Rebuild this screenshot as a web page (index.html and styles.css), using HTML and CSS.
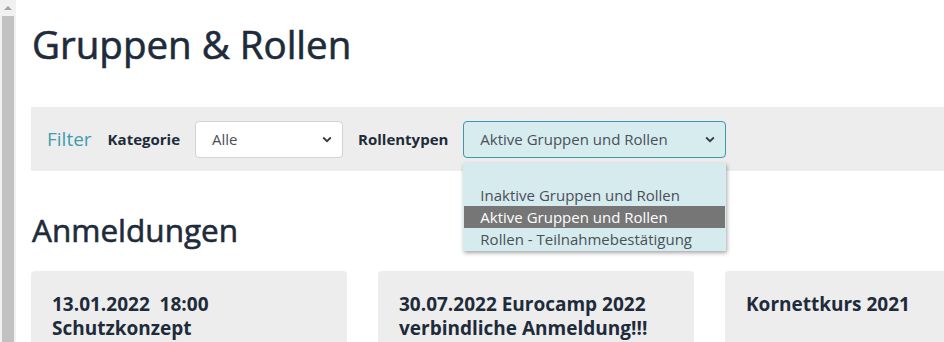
FILE: index.html
```html
<!DOCTYPE html>
<html lang="de">
<head>
    <meta charset="UTF-8">
    <meta name="viewport" content="width=device-width, initial-scale=1.0">
    <title>Gruppen &amp; Rollen</title>
    <link rel="stylesheet" href="styles.css">
</head>
<body>
    <div class="page">
        <div class="scrollbar">
            <div class="scroll-arrow"></div>
            <div class="scroll-thumb"></div>
        </div>
        <main class="content">
            <h1>Gruppen &amp; Rollen</h1>

            <div class="filter">
                <span class="filter-title">Filter</span>
                <span class="filter-label">Kategorie</span>
                <div class="select select-kategorie">
                    <span>Alle</span>
                    <svg class="chevron" width="10" height="7" viewBox="0 0 10 7"><path d="M1.2 1.5 L5 5.2 L8.8 1.5" fill="none" stroke="#343a40" stroke-width="1.8"/></svg>
                </div>
                <span class="filter-label">Rollentypen</span>
                <div class="select-wrap">
                    <div class="select select-rollen">
                        <span>Aktive Gruppen und Rollen</span>
                        <svg class="chevron" width="10" height="7" viewBox="0 0 10 7"><path d="M1.2 1.5 L5 5.2 L8.8 1.5" fill="none" stroke="#343a40" stroke-width="1.8"/></svg>
                    </div>
                    <!-- open option list of the select -->
                    <ul class="dropdown">
                        <li class="empty"></li>
                        <li>Inaktive Gruppen und Rollen</li>
                        <li class="selected">Aktive Gruppen und Rollen</li>
                        <li>Rollen - Teilnahmebestätigung</li>
                    </ul>
                </div>
            </div>

            <h2>Anmeldungen</h2>

            <div class="cards">
                <div class="card">
                    <h3>13.01.2022&nbsp;&nbsp;18:00<br>Schutzkonzept</h3>
                </div>
                <div class="card">
                    <h3>30.07.2022 Eurocamp 2022<br>verbindliche Anmeldung!!!</h3>
                </div>
                <div class="card">
                    <h3>Kornettkurs 2021</h3>
                </div>
            </div>
        </main>
    </div>
</body>
</html>
```

FILE: styles.css
```css
body {
    margin: 0;
    padding: 0;
    font-family: "Open Sans", "Noto Sans", sans-serif;
    color: #1e2b3a;
    background-color: #fff;
    overflow: hidden;
}
.page {
    display: flex;
    height: 342px;
    overflow: hidden;
}
.scrollbar {
    flex: 0 0 16px;
    background-color: #f1f1f1;
    display: flex;
    flex-direction: column;
    align-items: center;
}
.scroll-arrow {
    margin-top: 6px;
    width: 0;
    height: 0;
    border-left: 4px solid transparent;
    border-right: 4px solid transparent;
    border-bottom: 4px solid #a3a3a3;
}
.scroll-thumb {
    margin-top: 6px;
    width: 12px;
    flex: 1;
    background-color: #c1c1c1;
}
.content {
    flex: 0 0 1100px;
    padding: 0 15px;
}
h1,
h2 {
    font-weight: 500;
    -webkit-text-stroke: 0.6px #1e2b3a;
    padding-left: 1px;
}
h1 {
    font-size: 38.5px;
    margin: 18px 0 0;
    line-height: 52px;
}
h2 {
    font-size: 31.5px;
    margin: 37px 0 0;
    line-height: 44px;
}
.filter {
    margin-top: 37px;
    width: 1000px;
    height: 64px;
    box-sizing: border-box;
    padding: 0 16px;
    background-color: #ededed;
    display: flex;
    align-items: center;
    gap: 15px;
}
.filter-title {
    font-size: 19px;
    color: #3f9cae;
    margin-right: 1px;
}
.filter-label {
    font-size: 15px;
    font-weight: 700;
}
.select {
    height: 37px;
    box-sizing: border-box;
    border: 1px solid #ced4da;
    border-radius: 4px;
    background-color: #fff;
    display: flex;
    align-items: center;
    justify-content: space-between;
    padding: 0 10px 0 16px;
    font-size: 15px;
    color: #495057;
}
.select-kategorie {
    width: 148px;
}
.select-wrap {
    position: relative;
}
.select-rollen {
    width: 263px;
    background-color: #d6ecef;
    border-color: #3a9aa8;
}
.dropdown {
    position: absolute;
    top: 42px;
    left: 0;
    width: 263px;
    box-sizing: border-box;
    margin: 0;
    padding: 1px 1px 1px;
    list-style: none;
    background-color: #d6ebee;
    box-shadow: 1px 2px 4px rgba(0, 0, 0, 0.35);
    font-size: 15px;
    color: #495057;
    z-index: 2;
}
.dropdown li {
    height: 22px;
    line-height: 22px;
    padding-left: 16px;
}
.dropdown li.empty {
    height: 20px;
}
.dropdown li.selected {
    background-color: #767676;
    color: #fff;
}
.cards {
    margin-top: 19px;
    display: flex;
    gap: 31px;
}
.card {
    flex: 0 0 316px;
    height: 120px;
    box-sizing: border-box;
    padding: 21px 21px;
    background-color: #ededed;
    border-radius: 4px;
}
.card h3 {
    margin: 0;
    font-size: 19px;
    font-weight: 700;
    line-height: 24px;
}
```
